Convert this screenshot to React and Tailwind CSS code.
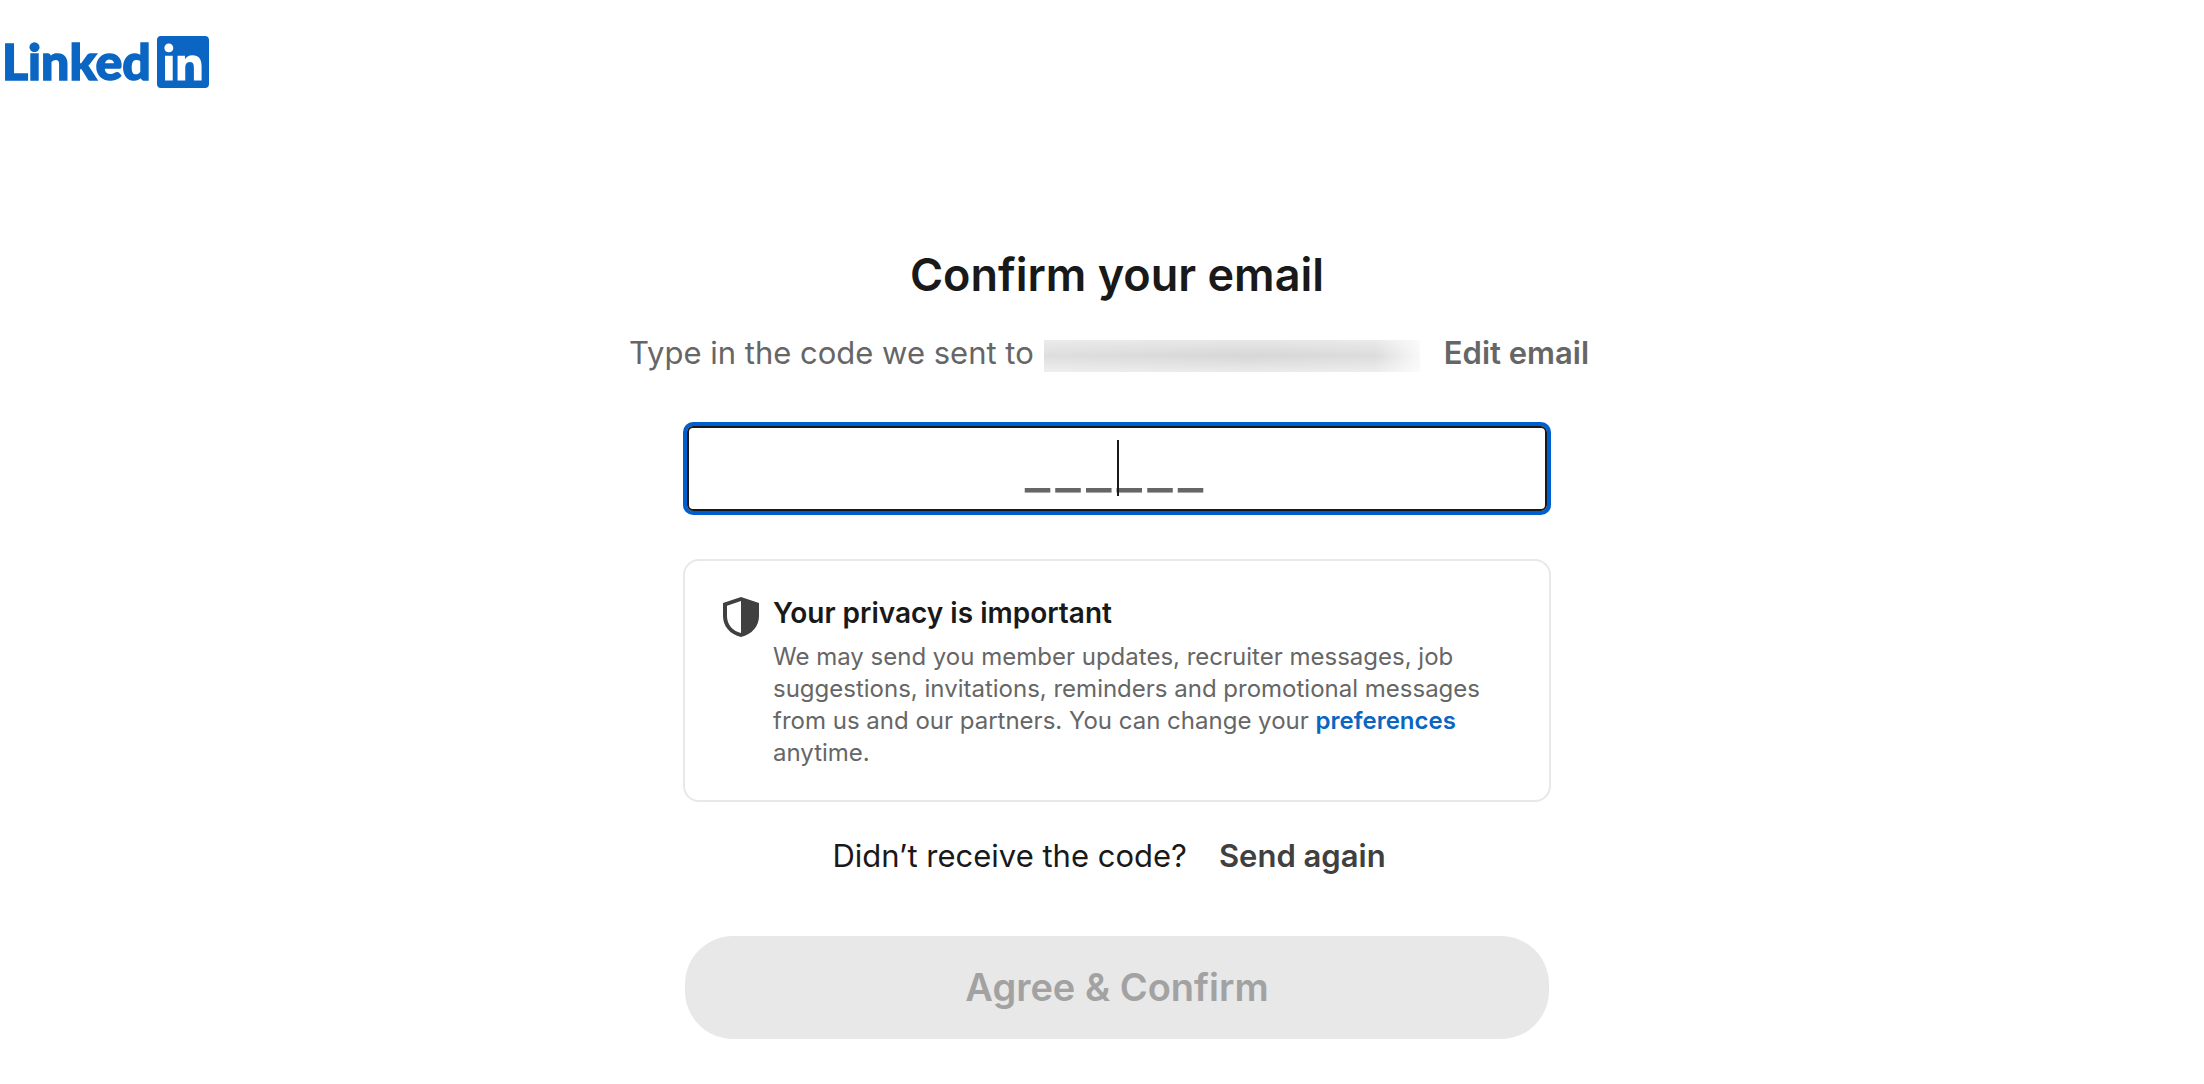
import React from "react";
import { FaLinkedin } from "react-icons/fa";

function Logo() {
  return (
    <a href="#" aria-label="LinkedIn" className="flex items-center text-[#0a66c2]">
      <svg className="h-16 w-[156px]" viewBox="0 0 156 64" aria-hidden="true">
        <text
          x="1"
          y="50"
          fontSize="50"
          fontWeight="900"
          fill="currentColor"
          stroke="currentColor"
          strokeWidth="1.500"
          className="font-[Lato,sans-serif]"
        >
          Linked
        </text>
      </svg>
      <FaLinkedin className="h-[60px] w-[52px]" aria-hidden="true" />
    </a>
  );
}

function Shield() {
  return (
    <svg className="mt-1 h-10 w-9 shrink-0 text-[#404040]" viewBox="0 0 36 40" fill="currentColor" aria-hidden="true">
      <path
        fillRule="evenodd"
        d="M18 0 L36 6 V19 C36 29 29 37.500 18 40 C7 37.500 0 29 0 19 V6 Z M18 4 L4 8.700 V19 C4 27.500 9.500 34 18 36 Z"
      />
    </svg>
  );
}

// The hidden address: a grey bar, lighter along its top, bottom and right edges.
function RedactedEmail() {
  return (
    <span className="mt-1.5 mr-6 ml-2.5 h-8 w-[376px] bg-linear-to-r from-[#dedede] via-[#d7d7d7] via-55% to-[#dedede]">
      <span className="block h-full bg-linear-to-r from-transparent from-88% to-white/80">
        <span className="block h-full bg-linear-to-b from-white/40 via-transparent to-white/50" />
      </span>
    </span>
  );
}

// Six slots separated by hair spaces.
const CODE_PLACEHOLDER = Array(6).fill("_").join("\u200a");

export default function App() {
  return (
    <div className="min-h-screen bg-white font-[Inter,sans-serif] text-[#191919]">
      <header className="pt-[30px] pl-px">
        <Logo />
      </header>
      <main className="flex flex-col items-center pt-[151px] pb-11 pl-[30px]">
        <h1 className="text-[45px] leading-[60px] font-semibold">Confirm your email</h1>
        <p className="mt-7 flex items-center pr-4 text-[31px] leading-10 text-[#666666]">
          <span>Type in the code we sent to</span>
          <RedactedEmail />
          <button type="button" className="font-semibold">
            Edit email
          </button>
        </p>
        <form className="mt-[49px] w-full max-w-[868px]" onSubmit={(e) => e.preventDefault()}>
          <div className="relative p-1">
            <input
              aria-label="Verification code"
              placeholder={CODE_PLACEHOLDER}
              maxLength={6}
              className="block h-[85px] w-full rounded-md border-2 border-[#191919] pr-1.5 pb-0.5 text-center text-[56px] ring-4 ring-[#005fcf] outline-none placeholder:text-[#666666]"
            />
            <span className="absolute top-[18px] left-1/2 h-14 w-0.5 bg-[#191919]" />
          </div>
          <section className="mt-11 flex gap-3.5 rounded-2xl border-2 border-[#e8e8e8] px-[38px] pt-8 pb-[31px]">
            <Shield />
            <div className="text-2xl leading-8 text-[#666666]">
              <h2 className="mb-2 text-[28px] leading-10 font-semibold text-[#191919]">Your privacy is important</h2>
              <p>
                We may send you member updates, recruiter messages, job suggestions, invitations, reminders and
                promotional messages from us and our partners. You can change your{" "}
                <a href="#" className="font-semibold text-[#0a66c2]">
                  preferences
                </a>{" "}
                anytime.
              </p>
            </div>
          </section>
          <p className="mt-[34px] flex justify-center gap-8 pr-4 text-[31px] leading-10">
            <span>Didn’t receive the code?</span>
            <button type="button" className="font-semibold text-[#404040]">
              Send again
            </button>
          </p>
          <div className="mt-[60px] px-0.5">
            <button
              type="submit"
              disabled
              className="h-[103px] w-full rounded-[48px] bg-[#e8e8e8] text-[38px] font-semibold text-[#a2a2a2]"
            >
              Agree &amp; Confirm
            </button>
          </div>
        </form>
      </main>
    </div>
  );
}
